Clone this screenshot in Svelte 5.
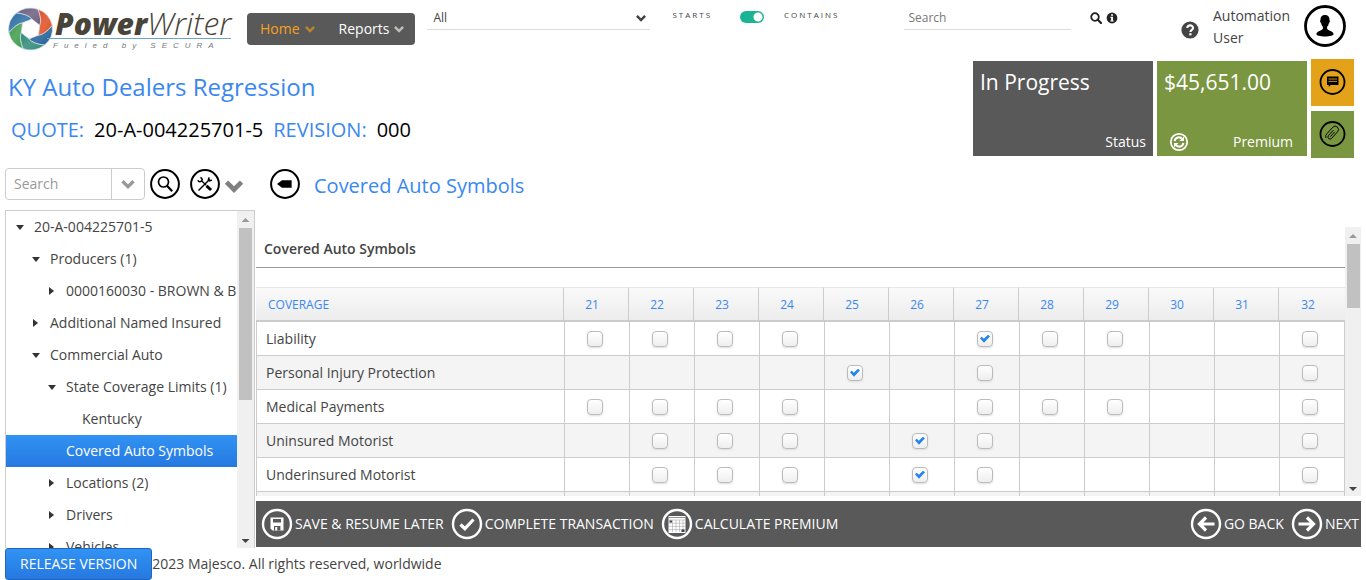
<script>
  const tree = [
    { label: '20-A-004225701-5', level: 0, arrow: 'open' },
    { label: 'Producers (1)', level: 1, arrow: 'open' },
    { label: '0000160030 - BROWN & B', level: 2, arrow: 'closed' },
    { label: 'Additional Named Insured', level: 1, arrow: 'closed' },
    { label: 'Commercial Auto', level: 1, arrow: 'open' },
    { label: 'State Coverage Limits (1)', level: 2, arrow: 'open' },
    { label: 'Kentucky', level: 3, arrow: '' },
    { label: 'Covered Auto Symbols', level: 2, arrow: '', selected: true },
    { label: 'Locations (2)', level: 2, arrow: 'closed' },
    { label: 'Drivers', level: 2, arrow: 'closed' },
    { label: 'Vehicles', level: 2, arrow: 'closed' }
  ];

  const symbols = [21, 22, 23, 24, 25, 26, 27, 28, 29, 30, 31, 32];

  const coverages = [
    { name: 'Liability', options: [21, 22, 23, 24, 27, 28, 29, 32], picked: [27] },
    { name: 'Personal Injury Protection', options: [25, 27, 32], picked: [25] },
    { name: 'Medical Payments', options: [21, 22, 23, 24, 27, 28, 29, 32], picked: [] },
    { name: 'Uninsured Motorist', options: [22, 23, 24, 26, 27, 32], picked: [26] },
    { name: 'Underinsured Motorist', options: [22, 23, 24, 26, 27, 32], picked: [26] },
    { name: '', options: [], picked: [] }
  ];

  // Aperture mark: six blades swept around a hexagonal opening.
  const point = (angle, rx, ry) => {
    const a = (angle * Math.PI) / 180;
    return `${(22.5 + rx * Math.cos(a)).toFixed(1)} ${(22 + ry * Math.sin(a)).toFixed(1)}`;
  };
  const blades = ['#1f5f98', '#2f8a78', '#3f9c4a', '#2a6ca3', '#6d5f80', '#e04e22'].map((color, i) => {
    const a = i * 60 - 10;
    return {
      color,
      d: `M${point(a, 22, 21)} Q${point(a + 30, 25, 24)} ${point(a + 60, 22, 21)} Q${point(a + 92, 15, 15)} ${point(a + 108, 10, 10)} L${point(a + 48, 10, 10)} Q${point(a + 32, 15, 15)} ${point(a, 22, 21)}Z`
    };
  });
</script>

{#snippet chevron(size)}
  <svg width={size} height={size} viewBox="0 0 12 12" aria-hidden="true"><path d="M1 4.8 2.8 3 6 6.2 9.2 3 11 4.8 6 9.8Z" fill="currentColor" /></svg>
{/snippet}

{#snippet rail(thumb)}
  <div class="rail" aria-hidden="true">
    <span class="up"></span>
    <span class="thumb" style="height: {thumb}px"></span>
    <span class="down"></span>
  </div>
{/snippet}

<div class="app">
  <header>
    <div class="logo">
      <svg class="mark" width="46" height="44" viewBox="0 0 46 44" aria-hidden="true">
        <defs>
          <linearGradient id="shine" x1="0" y1="0" x2="1" y2="1">
            <stop offset="0" stop-color="#fff" stop-opacity="0" />
            <stop offset=".5" stop-color="#fff" stop-opacity=".15" />
            <stop offset="1" stop-color="#fff" stop-opacity="0" />
          </linearGradient>
        </defs>
        {#each blades as blade}
          <path d={blade.d} fill={blade.color} stroke="#d5e3ea" stroke-width=".7" />
          <path d={blade.d} fill="url(#shine)" />
        {/each}
      </svg>
      <div class="wordmark">
        <div class="name"><b>Power</b><span>Writer</span></div>
        <div class="tagline">Fueled by SECURA</div>
      </div>
    </div>

    <nav>
      <a class="current" href="#home">Home {@render chevron(12)}</a>
      <a href="#reports">Reports {@render chevron(12)}</a>
    </nav>

    <div class="scope">
      <select aria-label="Search scope"><option>All</option></select>
      {@render chevron(12)}
    </div>

    <label class="mode">
      <span>STARTS</span>
      <input type="checkbox" checked role="switch" />
      <span>CONTAINS</span>
    </label>

    <input class="find" type="search" aria-label="Search" placeholder="Search" />
    <div class="find-icons">
      <button aria-label="Run search">
        <svg width="12" height="12" viewBox="0 0 12 12"><circle cx="5" cy="5" r="3.8" fill="none" stroke="#222" stroke-width="1.8" /><path d="m7.8 7.8 3.2 3.2" stroke="#222" stroke-width="2.2" stroke-linecap="round" /></svg>
      </button>
      <button aria-label="Search information">
        <svg width="12" height="12" viewBox="0 0 12 12"><circle cx="6" cy="6" r="5.4" fill="#222" /><path d="M5.1 2.2h1.9v1.6H5.1zM4.4 4.8H7v3.6h.7v1.2H4.4V8.4h.7V6h-.7z" fill="#fff" /></svg>
      </button>
    </div>

    <div class="user">
      <button aria-label="Help">
        <svg width="18" height="18" viewBox="0 0 18 18"><circle cx="9" cy="9" r="8.6" fill="#444" /><path d="M6.2 7C6.2 3.4 12 3.5 12 6.9 12 9 9.4 8.8 9.4 11" fill="none" stroke="#fff" stroke-width="2.1" /><rect x="8.3" y="12.2" width="2.2" height="2.2" fill="#fff" /></svg>
      </button>
      <span class="username">Automation User</span>
      <button aria-label="User profile">
        <svg width="42" height="42" viewBox="0 0 42 42"><circle cx="21" cy="21" r="19.5" fill="#fff" stroke="#000" stroke-width="2.8" /><path d="M21 10c-3.3 0-4.6 2.2-4.5 5.1-.8.6-.3 2.7.7 3.3.3 1.5.9 2.6 1.7 3.4v2c-.8 1.8-6.2 2.2-6.5 5.3-.1 1.4 3.8 2.500 8.600 2.500s8.700-1.100 8.600-2.500c-.3-3.100-5.700-3.500-6.500-5.300v-2c.8-.8 1.400-1.900 1.700-3.400 1-.6 1.500-2.700.7-3.300.1-2.900-1.200-5.100-4.500-5.100Z" /></svg>
      </button>
    </div>
  </header>

  <section class="summary">
    <div class="quote">
      <h1>KY Auto Dealers Regression</h1>
      <dl>
        <dt>QUOTE:</dt><dd>20-A-004225701-5</dd>
        <dt>REVISION:</dt><dd>000</dd>
      </dl>
    </div>
    <div class="tile status">
      <strong>In Progress</strong>
      <div><span></span><span>Status</span></div>
    </div>
    <div class="tile premium">
      <strong>$45,651.00</strong>
      <div>
        <button aria-label="Refresh premium">
          <svg width="20" height="20" viewBox="0 0 20 20" fill="none" stroke="#fff"><circle cx="10" cy="10" r="8.2" stroke-width="1.8" /><path d="M5.6 9.2c.6-4.2 5.600-5 7.600-2M14.400 10.800c-.6 4.200-5.600 5-7.600 2" stroke-width="2" /><path d="M15 4.400v4.600h-4.600zM5 15.600v-4.600h4.600z" fill="#fff" stroke="none" /></svg>
        </button>
        <span>Premium</span>
      </div>
    </div>
    <div class="side">
      <button class="notes" aria-label="Notes">
        <svg width="28" height="28" viewBox="0 0 28 28"><circle cx="13.5" cy="14" r="12" fill="none" stroke="#000" stroke-width="1.8" /><path d="M8 8.500h11.500v8.500h-7.800L9.800 19v-2H8z" /><path d="M9.500 11h8.500M9.500 13.400h8.500" stroke="#e3a21a" stroke-width=".9" /></svg>
      </button>
      <button class="attach" aria-label="Attachments">
        <svg width="28" height="28" viewBox="0 0 28 28" fill="none" stroke="#000"><circle cx="13.5" cy="14" r="12" stroke-width="1.8" /><path transform="rotate(42 14 14)" d="M11.700 11v7.200a2.100 2.100 0 0 0 4.200 0V9.200a3.300 3.300 0 0 0-6.600 0v8.500a4.300 4.300 0 0 0 2 4M13.800 11.300v6.500" stroke-width=".9" /></svg>
      </button>
    </div>
  </section>

  <div class="toolbar">
    <div class="combo">
      <input type="text" aria-label="Search tree" placeholder="Search" />
      <button aria-label="Show search options">{@render chevron(16)}</button>
    </div>
    <button aria-label="Search">
      <svg width="30" height="30" viewBox="0 0 30 30" fill="none" stroke="#000"><circle cx="15" cy="15" r="13.900" stroke-width="2" /><circle cx="13.500" cy="13" r="5" stroke-width="1.700" /><path d="m17 16.800 5.200 5.400" stroke-width="2.200" /></svg>
    </button>
    <button class="tools" aria-label="Tools">
      <svg width="30" height="30" viewBox="0 0 30 30" fill="none" stroke="#000"><circle cx="15" cy="15" r="13.900" stroke-width="2" /><path d="m8.500 21.500 11.500-11.500" stroke-width="1.500" /><path d="m19.200 8.300-1 2.600 1.300 1.200 2.500-1" stroke-width="1.300" /><path d="M10.400 8.600c2.200.6 2.400 3.400.2 4-1.200.3-2.300-.3-2.700-1.300" stroke-width="1.600" /><path d="m11.800 12 4.500 4.400" stroke-width="1.300" /><path d="m16.500 16.800 4.600 4.200" stroke-width="3" /></svg>
      {@render chevron(22)}
    </button>
    <button class="back" aria-label="Collapse panel">
      <svg width="30" height="30" viewBox="0 0 30 30"><circle cx="15" cy="15" r="13.900" fill="none" stroke="#000" stroke-width="2" /><path d="M7 15 12 11.200h9.600v7.600H12z" /></svg>
    </button>
    <h2>Covered Auto Symbols</h2>
  </div>

  <div class="workspace">
    <aside>
      <ul>
        {#each tree as node}
          <li class:selected={node.selected} style="padding-left: {node.level * 16 + 8}px">
            <i class={node.arrow}></i><a href="#node">{node.label}</a>
          </li>
        {/each}
      </ul>
      {@render rail(172)}
    </aside>

    <main>
      <div class="panel">
        <div class="content">
          <h3>Covered Auto Symbols</h3>
          <table>
            <thead>
              <tr>
                <th class="first" scope="col">COVERAGE</th>
                {#each symbols as symbol}<th scope="col">{symbol}</th>{/each}
              </tr>
            </thead>
            <tbody>
              {#each coverages as row}
                <tr>
                  <td class="first">{row.name}</td>
                  {#each symbols as symbol}
                    <td>
                      {#if row.options.includes(symbol)}
                        <input type="checkbox" checked={row.picked.includes(symbol)} aria-label="{row.name} {symbol}" />
                      {/if}
                    </td>
                  {/each}
                </tr>
              {/each}
            </tbody>
          </table>
        </div>
        {@render rail(64)}
      </div>

      <div class="actions">
        <button>
          <svg width="32" height="32" viewBox="0 0 32 32"><circle cx="16" cy="16" r="14" fill="none" stroke="#fff" stroke-width="2.400" /><path d="M9.500 9.500h13v13h-11l-2-2z" fill="#fff" /><path d="M12 11h8v3.600h-8zM13 18h6.400v4.500H13z" fill="#595959" /><path d="M14.200 19h2v3.500h-2z" fill="#fff" /></svg>
          SAVE &amp; RESUME LATER
        </button>
        <button>
          <svg width="32" height="32" viewBox="0 0 32 32" fill="none" stroke="#fff"><circle cx="16" cy="16" r="14" stroke-width="2.400" /><path d="m9.500 16.500 4.400 4.200 8.600-9.200" stroke-width="3.200" /></svg>
          COMPLETE TRANSACTION
        </button>
        <button>
          <svg width="32" height="32" viewBox="0 0 32 32"><circle cx="16" cy="16" r="14" fill="none" stroke="#fff" stroke-width="2.400" /><path d="M7.500 8h17v17h-17z" fill="#fff" /><path d="M7.500 9.500h17" stroke="#777" stroke-width=".8" /><path d="M11.500 12v12M15 12v12M18.500 12v12M22 12v12M8 12h16M8 15.200h16M8 18.400h16M8 21.600h16" stroke="#aaa" stroke-width=".6" /><path d="M8.500 12.500h2.500v2H8.500zM20.500 21.500h3v2.500h-3z" fill="#345" /></svg>
          CALCULATE PREMIUM
        </button>
        <button class="push">
          <svg width="32" height="32" viewBox="0 0 32 32" fill="none" stroke="#fff"><circle cx="16" cy="16" r="14" stroke-width="2.400" /><path d="M24.500 16H10M16 9.500 9.500 16l6.500 6.500" stroke-width="3.200" /></svg>
          GO BACK
        </button>
        <button>
          <svg width="32" height="32" viewBox="0 0 32 32" fill="none" stroke="#fff"><circle cx="16" cy="16" r="14" stroke-width="2.400" /><path d="M7.500 16H22M16 9.500l6.500 6.500-6.500 6.500" stroke-width="3.200" /></svg>
          NEXT
        </button>
      </div>
    </main>
  </div>

  <footer>
    <button>RELEASE VERSION</button>
    <span>2023 Majesco. All rights reserved, worldwide</span>
  </footer>
</div>

<style>
  :global(body) {
    margin: 0;
    background: #fff;
  }
  .app {
    display: flex;
    flex-direction: column;
    height: 100vh;
    overflow: hidden;
    font: 14px/20px 'Open Sans', sans-serif;
    color: #444;
  }
  .app :is(h1, h2, h3, ul, dl, dd) {
    margin: 0;
    padding: 0;
    font-weight: 400;
  }
  button,
  input,
  select {
    box-sizing: border-box;
    margin: 0;
    padding: 0;
    border: 0;
    background: none;
    font: inherit;
    color: inherit;
    outline: 0;
  }
  a {
    color: inherit;
    text-decoration: none;
  }
  svg {
    display: block;
    flex: none;
  }

  header {
    display: flex;
    align-items: flex-start;
    flex: none;
    height: 58px;
    padding: 0 20px 0 8px;
  }
  .logo {
    display: flex;
    flex: none;
    width: 239px;
    padding-top: 7px;
    box-sizing: border-box;
  }
  .wordmark {
    flex: none;
    margin: 1px 0 0 -7px;
    color: #48443a;
    font-style: italic;
  }
  .name {
    height: 30px;
    margin-right: 5px;
    padding-left: 8px;
    border-bottom: 1px solid #6da3c4;
    font-size: 30px;
    line-height: 30px;
    white-space: nowrap;
  }
  .name b {
    font-weight: 800;
  }
  .name span {
    font-size: 32px;
    font-weight: 300;
  }
  .tagline {
    padding: 2px 0 0 6px;
    font: italic 8px/10px 'Liberation Sans', sans-serif;
    letter-spacing: 6px;
    color: #777;
  }
  nav {
    display: flex;
    gap: 23px;
    align-items: center;
    flex: none;
    height: 32px;
    margin-top: 13px;
    padding: 0 10px 0 13px;
    border-radius: 4px;
    background: #595959;
    color: #fff;
  }
  nav a {
    display: flex;
    gap: 4px;
    align-items: center;
  }
  nav :global(svg) {
    opacity: 0.6;
  }
  nav .current {
    color: #f7a01d;
  }
  .scope {
    display: flex;
    align-items: center;
    flex: 0 1 223px;
    height: 24px;
    margin: 6px 22px 0 12px;
    padding-right: 3px;
    box-sizing: border-box;
    border-bottom: 1px solid #ddd;
    font-size: 12px;
  }
  .scope select {
    flex: 1;
    min-width: 0;
    padding-left: 6px;
    appearance: none;
  }
  .mode {
    display: flex;
    flex: none;
    width: 232px;
    box-sizing: border-box;
    padding-top: 9px;
    font-size: 8px;
    line-height: 12px;
    letter-spacing: 2px;
  }
  .mode input {
    width: 24px;
    height: 12px;
    margin: 2px 20px 0 28px;
    border-radius: 6px;
    appearance: none;
    background: radial-gradient(circle at 18px 6px, #fff 4px, #1ab394 5px);
  }
  .find {
    flex: 0 1 167px;
    min-width: 0;
    height: 24px;
    margin: 6px 19px 0 0;
    padding-left: 4px;
    border-bottom: 1px solid #ddd;
    font-size: 12px;
  }
  .find::placeholder {
    color: #777;
  }
  .find-icons {
    display: flex;
    gap: 4px;
    padding-top: 12px;
  }
  .user {
    display: flex;
    align-items: flex-start;
    margin-left: auto;
    padding-top: 5px;
  }
  .user > button:first-child {
    margin-top: 16px;
  }
  .username {
    width: 78px;
    margin: 0 13px 0 14px;
    line-height: 22px;
  }

  .summary {
    display: flex;
    gap: 4px;
    flex: none;
    height: 100px;
    padding: 1px 12px 0 8px;
  }
  .quote {
    flex: 1;
    color: #3a87f2;
  }
  .quote h1 {
    padding-top: 10px;
    font-size: 24px;
    line-height: 36px;
  }
  dl {
    display: flex;
    font-size: 20px;
    line-height: 28px;
  }
  .quote dl {
    padding: 11px 0 0 3px;
  }
  .quote dd {
    margin: 0 10px;
    color: #000;
  }
  .tile {
    display: flex;
    flex-direction: column;
    justify-content: space-between;
    box-sizing: border-box;
    height: 95px;
    margin-top: 2px;
    padding: 6px 7px 4px;
    color: #fff;
  }
  .tile strong {
    font-size: 21px;
    line-height: 30px;
    font-weight: 400;
  }
  .tile div {
    display: flex;
    justify-content: space-between;
    align-items: center;
  }
  .status {
    width: 180px;
    background: #595959;
  }
  .premium {
    width: 150px;
    padding: 6px 14px 4px 7px;
    background: #7a9641;
  }
  .premium button {
    margin-left: 5px;
  }
  .side {
    display: flex;
    flex-direction: column;
    gap: 5px;
  }
  .side button {
    display: grid;
    place-content: center;
    width: 43px;
    height: 47px;
    padding-bottom: 2px;
    background: #7a9641;
  }
  .side .notes {
    background: #e3a21a;
  }

  .toolbar {
    display: flex;
    align-items: center;
    flex: none;
    height: 51px;
    padding: 0 5px 2px;
    box-sizing: border-box;
  }
  .combo {
    display: flex;
    width: 140px;
    height: 32px;
    margin-right: 5px;
    border: 1px solid #ccc;
    border-radius: 4px;
    box-sizing: border-box;
  }
  .combo input {
    flex: 1;
    min-width: 0;
    padding-left: 8px;
  }
  .combo input::placeholder {
    color: #999;
  }
  .combo button {
    display: grid;
    place-content: center;
    width: 33px;
    border-left: 1px solid #ccc;
    color: #999;
  }
  .tools {
    display: flex;
    gap: 3px;
    align-items: center;
    width: 80px;
    margin-left: 10px;
    color: #808080;
  }
  .tools :global(svg:last-child) {
    margin-top: 4px;
  }
  h2 {
    color: #3a87f2;
    font-size: 20px;
    line-height: 28px;
  }
  .app h2 {
    padding: 4px 0 0 14px;
  }

  .workspace {
    display: flex;
    flex: 1;
    min-height: 0;
    padding: 0 5px;
  }
  aside {
    display: flex;
    flex: none;
    width: 250px;
    box-sizing: border-box;
    border: 1px solid #ccc;
    border-bottom: 0;
  }
  ul {
    flex: 1;
    min-width: 0;
    overflow: hidden;
    list-style: none;
  }
  li {
    display: flex;
    align-items: center;
    height: 32px;
    white-space: nowrap;
  }
  li i {
    flex: none;
    width: 20px;
    height: 8px;
  }
  li i::before {
    display: block;
    width: 8px;
    height: 8px;
    margin-left: 2px;
    background: #333;
    content: none;
  }
  li i.open::before {
    content: '';
    clip-path: polygon(0 2px, 8px 2px, 4px 7px);
  }
  li i.closed::before {
    content: '';
    clip-path: polygon(1px 0, 6px 4px, 1px 8px);
  }
  .selected {
    background: linear-gradient(#3193f3, #2678e0);
    color: #fff;
  }
  .rail {
    display: flex;
    flex-direction: column;
    align-items: center;
    flex: none;
    width: 16px;
    background: #f0f0f0;
  }
  aside .rail {
    width: 17px;
  }
  .rail .up,
  .rail .down {
    flex: none;
    width: 8px;
    height: 4px;
    background: #999;
    clip-path: polygon(50% 0, 100% 100%, 0 100%);
  }
  .rail .up {
    margin: 7px 0 6px;
  }
  .rail .down {
    margin: auto 0 5px;
    background: #444;
    clip-path: polygon(0 0, 100% 0, 50% 100%);
  }
  .thumb {
    width: 13px;
    background: #c1c1c1;
  }

  main {
    display: flex;
    flex-direction: column;
    flex: 1;
    min-width: 0;
    padding: 17px 0 1px 1px;
  }
  .panel {
    display: flex;
    flex: 1;
    min-height: 0;
    overflow: hidden;
  }
  .content {
    flex: 1;
    min-width: 0;
  }
  h3 {
    border-bottom: 1px solid #999;
    font-size: 14px;
    line-height: 20px;
  }
  .app h3 {
    padding: 12px 8px 8px;
    font-weight: 600;
  }
  table {
    width: 100%;
    margin-top: 19px;
    border-collapse: separate;
    border-spacing: 0;
    table-layout: fixed;
  }
  th {
    width: 65px;
    height: 35px;
    box-sizing: border-box;
    padding: 2px 8px 0 0;
    border: solid #ccc;
    border-width: 1px 1px 2px 0;
    border-top-color: #e8e8e8;
    background: linear-gradient(#fafafa, #ececec);
    color: #3a87f2;
    font-size: 12px;
    font-weight: 400;
  }
  th:last-child {
    width: 66px;
    border-right: 0;
  }
  th.first {
    width: auto;
    padding-left: 12px;
    text-align: left;
  }
  td {
    height: 34px;
    box-sizing: border-box;
    padding: 0 4px 0 0;
    border: solid #ccc;
    border-width: 0 0 1px 1px;
    text-align: center;
  }
  td.first {
    padding-left: 9px;
    text-align: left;
  }
  td:last-child {
    border-right: 1px solid #ccc;
  }
  tr:nth-child(even) td {
    background: #f4f4f4;
  }
  td input {
    display: inline-block;
    width: 16px;
    height: 16px;
    margin-bottom: 2px;
    border: 1px solid #bbb;
    border-radius: 4px;
    appearance: none;
    background: linear-gradient(#fff, #eee);
    box-shadow: 0 1px 2px #ddd;
    vertical-align: middle;
  }
  td input:checked::before {
    display: block;
    width: 10px;
    height: 8px;
    margin: 3px 2px;
    background: #2583ee;
    clip-path: polygon(0 45%, 18% 25%, 38% 50%, 80% 0, 100% 20%, 40% 100%);
    content: '';
  }
  .actions {
    display: flex;
    gap: 7px;
    align-items: center;
    flex: none;
    height: 46px;
    margin-top: 5px;
    padding: 0 2px 0 5px;
    background: #595959;
    color: #fff;
  }
  .actions button {
    display: flex;
    gap: 2px;
    align-items: center;
    white-space: nowrap;
  }
  .actions .push {
    margin-left: auto;
  }

  footer {
    display: flex;
    align-items: center;
    flex: none;
    height: 32px;
    padding: 0 5px;
  }
  footer button {
    height: 32px;
    padding: 0 14px;
    border: 1px solid #1f66bd;
    border-radius: 3px;
    background: linear-gradient(#3193f3, #2678e0);
    color: #fff;
  }
</style>
